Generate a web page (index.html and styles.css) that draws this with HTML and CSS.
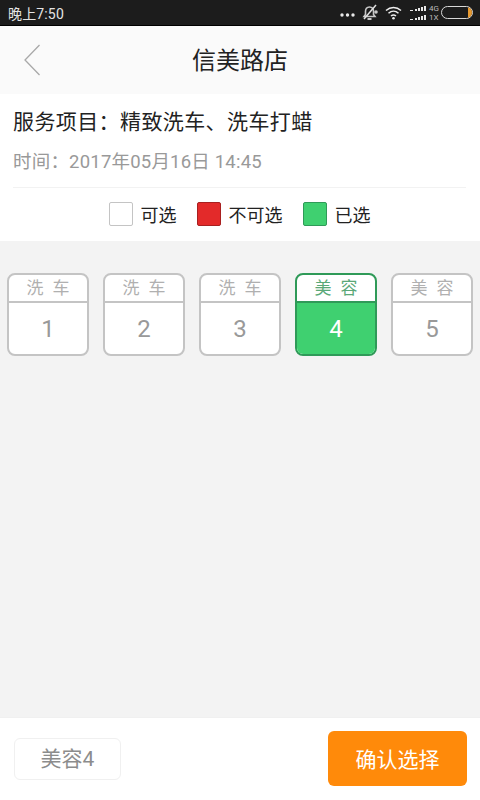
FILE: index.html
```html
<!DOCTYPE html>
<html lang="zh">

<head>
  <meta charset="UTF-8">
  <meta name="viewport" content="width=device-width, initial-scale=1.0">
  <link rel="stylesheet" href="styles.css">
</head>

<body>
  <div class="page">
    <div class="status-bar">
      <span class="status-time">晚上7:50</span>
      <div class="status-icons">
        <svg width="15" height="4" viewBox="0 0 15 4" class="dots">
          <circle cx="2" cy="2" r="1.7" fill="#e8e8e8" />
          <circle cx="7.500" cy="2" r="1.7" fill="#e8e8e8" />
          <circle cx="13" cy="2" r="1.7" fill="#e8e8e8" />
        </svg>
        <svg width="18" height="17" viewBox="0 0 18 17" class="bell">
          <path d="M8.500 3C5.700 3 4.500 5 4.500 7.500v3L3 12.500h11l-1.500-2v-3C12.500 5 11.300 3 8.500 3z" fill="none" stroke="#c8c8c8" stroke-width="1.600" />
          <path d="M6.500 14h4v2h-4z" fill="#c8c8c8" />
          <path d="M15 1L3 15" stroke="#e0e0e0" stroke-width="1.500" />
          <circle cx="15" cy="8" r="1.800" fill="#c8c8c8" />
        </svg>
        <svg width="17" height="14" viewBox="0 0 17 14" class="wifi">
          <path d="M1 4.500C5.500 .5 11.500 .5 16 4.500M3.500 7.300c3-2.700 7-2.700 10 0M6 10c1.500-1.300 3.500-1.300 5 0" fill="none" stroke="#eeeeee" stroke-width="1.500" />
          <circle cx="8.500" cy="12.200" r="1.300" fill="#eeeeee" />
        </svg>
        <div class="signal">
          <svg width="18" height="16" viewBox="0 0 18 16">
            <path d="M0 5h3v1H0zM5 4h2v2H5zM8 3h2v3H8zM11 2h2v4h-2zM14 1h2v5h-2zM0 14h3v1H0zM5 13h2v2H5zM8 12h2v3H8zM11 11h2v4h-2zM14 10h2v5h-2z" fill="#e8e8e8" />
          </svg>
          <div class="net-labels"><span>4G</span><span>1X</span></div>
        </div>
        <div class="battery"><div class="battery-level"></div></div>
      </div>
    </div>

    <div class="nav">
      <svg class="back" width="20" height="34" viewBox="0 0 20 34">
        <path d="M16.500 2L2 17l14.500 15" fill="none" stroke="#a8a8a8" stroke-width="1.300" />
      </svg>
      <div class="nav-title">信美路店</div>
    </div>

    <div class="info">
      <div class="service">服务项目：精致洗车、洗车打蜡</div>
      <div class="time">时间：2017年05月16日 14:45</div>
      <div class="legend">
        <div class="legend-item"><span class="box"></span>可选</div>
        <div class="legend-item"><span class="box box-red"></span>不可选</div>
        <div class="legend-item"><span class="box box-green"></span>已选</div>
      </div>
    </div>

    <div class="stations">
      <div class="station">
        <div class="station-head">洗 车</div>
        <div class="station-num">1</div>
      </div>
      <div class="station">
        <div class="station-head">洗 车</div>
        <div class="station-num">2</div>
      </div>
      <div class="station">
        <div class="station-head">洗 车</div>
        <div class="station-num">3</div>
      </div>
      <div class="station active">
        <div class="station-head">美 容</div>
        <div class="station-num">4</div>
      </div>
      <div class="station">
        <div class="station-head">美 容</div>
        <div class="station-num">5</div>
      </div>
    </div>

    <div class="footer">
      <div class="chosen">美容4</div>
      <button class="btn-confirm" type="button">确认选择</button>
    </div>
  </div>
</body>

</html>
```

FILE: styles.css
```css
* {
  box-sizing: border-box;
}

html,
body {
  margin: 0;
  padding: 0;
}

body {
  font-family: "Roboto", "Noto Sans CJK SC", sans-serif;
}

.page {
  display: flex;
  flex-direction: column;
  width: 480px;
  height: 800px;
  overflow: hidden;
  background-color: #f3f3f3;
}

.status-bar {
  display: flex;
  align-items: center;
  justify-content: space-between;
  height: 26px;
  padding: 0 7px 0 8px;
  background-color: #1c1c1c;
  border-bottom: 1px solid #000;
  color: #e4e4e4;
}

.status-time {
  font-size: 14px;
  letter-spacing: 0.15px;
}

.status-icons {
  display: flex;
  align-items: center;
}

.dots {
  margin-right: 6px;
  margin-top: 5px;
}

.bell {
  margin-right: 6px;
}

.wifi {
  margin-right: 8px;
}

.signal {
  display: flex;
  align-items: center;
  margin-right: 2px;
}

.net-labels {
  display: flex;
  flex-direction: column;
  margin-left: 1px;
  font-size: 8px;
  line-height: 9px;
  color: #bbbbbb;
}

.battery {
  display: flex;
  justify-content: flex-end;
  width: 32px;
  height: 13px;
  border: 1px solid #d8d8d8;
  border-radius: 7px;
  overflow: hidden;
}

.battery-level {
  width: 4px;
  background-color: #e89a30;
}

.nav {
  position: relative;
  height: 68px;
  padding-top: 1px;
  background-color: #fafafa;
  text-align: center;
  line-height: 68px;
}

.nav-title {
  font-size: 24px;
  color: #222222;
}

.back {
  position: absolute;
  left: 23px;
  top: 17px;
}

.info {
  height: 147px;
  padding: 0 14px;
  background-color: #ffffff;
}

.service {
  margin-left: -1px;
  padding-top: 12px;
  font-size: 21px;
  line-height: 32px;
  letter-spacing: 0.4px;
  color: #222222;
}

.time {
  height: 50px;
  margin-left: -1px;
  padding-top: 10px;
  border-bottom: 1px solid #f2f2f2;
  font-size: 18.5px;
  line-height: 28px;
  letter-spacing: 0.2px;
  color: #999999;
}

.legend {
  display: flex;
  align-items: center;
  justify-content: center;
  gap: 20px;
  height: 51px;
  margin-left: -1px;
  font-size: 18px;
  color: #222222;
}

.legend-item {
  display: flex;
  align-items: center;
}

.box {
  width: 24px;
  height: 24px;
  margin-right: 8px;
  border: 1px solid #c4c4c4;
  border-radius: 2px;
  background-color: #ffffff;
}

.box-red {
  border-color: #a82020;
  background-color: #e32a2a;
}

.box-green {
  border-color: #2f9a58;
  background-color: #3fd070;
}

.stations {
  display: flex;
  flex: 1;
  align-items: flex-start;
  gap: 14px;
  padding: 32px 7px 0;
}

.station {
  width: 82px;
  height: 83px;
  border: 2px solid #c4c4c4;
  border-radius: 8px;
  background-color: #ffffff;
  overflow: hidden;
  text-align: center;
}

.station-head {
  height: 28px;
  border-bottom: 2px solid #c4c4c4;
  font-size: 17px;
  line-height: 26px;
  word-spacing: 5px;
  color: #b0b0b0;
}

.station-num {
  font-size: 24px;
  line-height: 53px;
  color: #999999;
}

.station.active {
  border-color: #2f9a58;
}

.active .station-head {
  border-bottom-color: #2f9a58;
  color: #5aa878;
}

.active .station-num {
  height: 100%;
  background-color: #3fd070;
  color: #ffffff;
}

.footer {
  display: flex;
  align-items: center;
  justify-content: space-between;
  height: 83px;
  padding: 0 13px 0 14px;
  background-color: #ffffff;
  border-top: 1px solid #f0f0f0;
}

.chosen {
  width: 107px;
  height: 42px;
  border: 1px solid #f0f0f0;
  border-radius: 6px;
  font-size: 21px;
  line-height: 40px;
  text-align: center;
  color: #8c8c8c;
}

.btn-confirm {
  width: 139px;
  height: 55px;
  margin-bottom: 2px;
  border: none;
  border-radius: 6px;
  background-color: #ff8a0a;
  font-family: inherit;
  font-size: 21px;
  color: #ffffff;
}
```
